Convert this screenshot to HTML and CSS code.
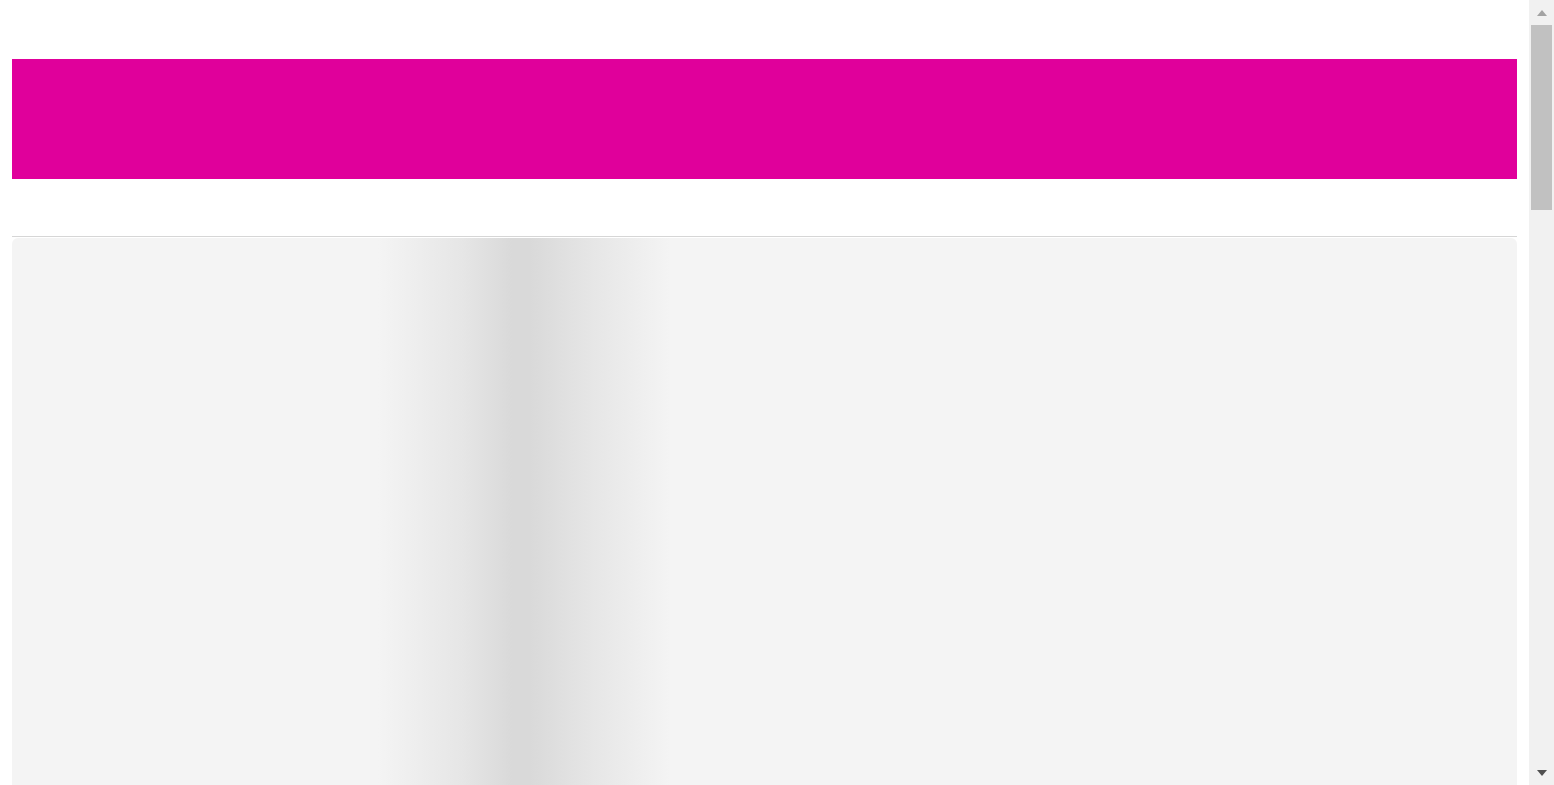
FILE: index.html
```html
<!DOCTYPE html>
<html lang="en">
<head>
<meta charset="utf-8">
<title>Loading</title>
<link rel="stylesheet" href="styles.css">
</head>
<body>
  <div class="window">
    <div class="viewport">
      <div class="page">
        <header class="banner"></header>
        <main class="content">
          <div class="skeleton"></div>
        </main>
      </div>
    </div>
    <aside class="scrollbar" aria-hidden="true">
      <div class="sb-button"><span class="arrow-up"></span></div>
      <div class="sb-track"><div class="sb-thumb"></div></div>
      <div class="sb-button"><span class="arrow-down"></span></div>
    </aside>
  </div>
</body>
</html>
```
FILE: styles.css
```css
html, body {
  margin: 0;
  padding: 0;
  background: #ffffff;
  font-family: "Liberation Sans", Arial, sans-serif;
  overflow: hidden;
}
.window {
  display: flex;
  height: 100vh;
}
.viewport {
  flex: 1;
  min-width: 0;
  overflow: hidden;
}
.page {
  padding: 59px 12px 0;
}
.banner {
  height: 120px;
  background: #e0009b;
}
.content {
  margin-top: 57px;
  border-top: 1px solid #d6d6d6;
  padding-top: 1px;
}
.skeleton {
  height: 2880px;
  border-radius: 6px;
  background: linear-gradient(90deg,
    #f4f4f4 0,
    #f4f4f4 366px,
    #e6e6e6 450px,
    #d9d9d9 500px,
    #d9d9d9 518px,
    #e6e6e6 580px,
    #f4f4f4 658px,
    #f4f4f4 100%);
}
.scrollbar {
  width: 25px;
  flex: none;
  display: flex;
  flex-direction: column;
  background: #f1f1f1;
}
.sb-button {
  height: 25px;
  flex: none;
  display: flex;
  align-items: center;
  justify-content: center;
}
.arrow-up {
  width: 0;
  height: 0;
  border-left: 5.5px solid transparent;
  border-right: 5.5px solid transparent;
  border-bottom: 6px solid #a3a3a3;
}
.arrow-down {
  width: 0;
  height: 0;
  border-left: 5.5px solid transparent;
  border-right: 5.5px solid transparent;
  border-top: 6px solid #505050;
}
.sb-track {
  flex: 1;
  padding: 0 2px;
}
.sb-thumb {
  height: 185px;
  background: #c1c1c1;
}
```
